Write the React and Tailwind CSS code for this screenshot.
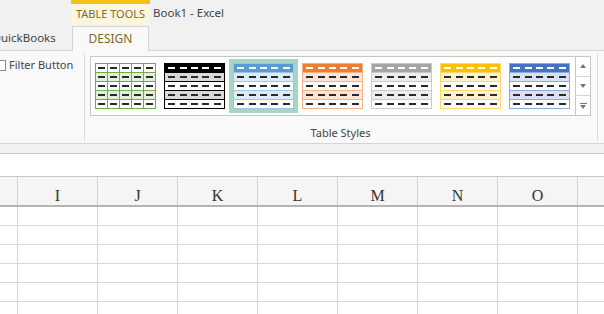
import React from "react";

const STYLES = [
  { kind: "grid", border: "#70ad47", band: "#e2efda", line: "#70ad47", head: null },
  { kind: "band", border: "#000000", band: "#d9d9d9", line: "#000000", head: "#000000" },
  { kind: "band", border: "#9dc3e6", band: "#ddebf7", line: "#9dc3e6", head: "#5b9bd5", selected: true },
  { kind: "band", border: "#f4b183", band: "#fce4d6", line: "#f8cbad", head: "#ed7d31" },
  { kind: "band", border: "#c9c9c9", band: "#ededed", line: "#d9d9d9", head: "#a5a5a5" },
  { kind: "band", border: "#ffd966", band: "#fff2cc", line: "#ffe699", head: "#ffc000" },
  { kind: "band", border: "#8ea9db", band: "#d9e1f2", line: "#b4c6e7", head: "#4472c4" },
];

const COLUMNS = ["I", "J", "K", "L", "M", "N", "O"];

function Dash({ light }) {
  return <div className={light ? "w-[7px] h-[2px] bg-white" : "w-[7px] h-[2px] bg-[#2a2a2a]"} />;
}

function Thumb({ s }) {
  const rows = [0, 1, 2, 3, 4];
  const cols = [0, 1, 2, 3, 4];
  if (s.kind === "grid") {
    return (
      <div className="w-[61px] h-[46px] flex flex-col gap-px p-px" style={{ background: s.line }}>
        {rows.map((r) => (
          <div key={r} className="flex-1 flex gap-px">
            {cols.map((c) => (
              <div
                key={c}
                className="flex-1 flex items-center justify-center"
                style={{ background: r % 2 === 1 ? s.band : "#ffffff" }}
              >
                <Dash />
              </div>
            ))}
          </div>
        ))}
      </div>
    );
  }
  return (
    <div className="w-[61px] h-[46px] flex flex-col gap-px p-px" style={{ background: s.border }}>
      {rows.map((r) => {
        let bg = "#ffffff";
        if (r === 0) bg = s.head;
        else if (r % 2 === 1) bg = s.band;
        return (
          <div key={r} className="flex-1 flex items-center justify-around px-[1px]" style={{ background: bg }}>
            {cols.map((c) => (
              <Dash key={c} light={r === 0} />
            ))}
          </div>
        );
      })}
    </div>
  );
}

function Arrow({ dir, bar }) {
  return (
    <div className="flex flex-col items-center">
      {bar && <div className="w-[7px] h-px bg-[#777] mb-px" />}
      {dir === "up" ? (
        <div className="w-0 h-0 border-l-[3px] border-r-[3px] border-b-[4px] border-l-transparent border-r-transparent border-b-[#777]" />
      ) : (
        <div className="w-0 h-0 border-l-[3px] border-r-[3px] border-t-[4px] border-l-transparent border-r-transparent border-t-[#777]" />
      )}
    </div>
  );
}

export default function App() {
  return (
    <div className="w-[604px] h-[314px] overflow-hidden bg-white text-[#444] font-['Noto_Sans',sans-serif] flex flex-col">
      {/* title bar */}
      <div className="h-[25px] bg-[#f1f1f1] flex shrink-0">
        <div className="w-[71px]" />
        <div className="w-[79px] border-t-4 border-[#f2c314] bg-[#fcf6df] flex items-center justify-center text-[11px] text-[#7d6d22]">
          TABLE TOOLS
        </div>
        <div className="pl-[3px] flex items-center text-[11.5px] text-[#444]">Book1 - Excel</div>
      </div>

      {/* tabs */}
      <div className="h-[25px] bg-[#f1f1f1] flex items-end shrink-0 relative z-10">
        <div className="w-[72px] h-full overflow-hidden flex items-center">
          <span className="-ml-[8px] text-[11.5px] text-[#444] whitespace-nowrap">QuickBooks</span>
        </div>
        <div className="w-[77px] h-[25px] -mb-px bg-[#f9f9f9] border border-b-0 border-[#d5d5d5] flex items-center justify-center text-[12px] text-[#7d6d22]">
          DESIGN
        </div>
      </div>

      {/* ribbon */}
      <div className="h-[94px] shrink-0 bg-[#f9f9f9] border-t border-b border-[#d5d5d5] flex">
        <div className="w-[84px] flex flex-col pt-[7px]">
          <div className="flex items-center gap-[3px]">
            <div className="w-[11px] h-[11px] -ml-[5px] bg-white border border-[#8a8a8a]" />
            <span className="text-[11px] text-[#444] leading-[14px] whitespace-nowrap">Filter Button</span>
          </div>
        </div>
        <div className="w-px bg-[#dcdcdc] my-[2px]" />
        <div className="w-[512px] flex flex-col pl-[5px] pt-[5px]">
          <div className="w-[501px] h-[60px] bg-white border border-[#c6c6c6] flex">
            <div className="flex pt-[2px] w-[485px]">
              {STYLES.map((s, i) => (
                <div
                  key={i}
                  className={
                    s.selected
                      ? "w-[69px] h-[54px] flex items-center justify-center bg-[#a6d6c2]"
                      : "w-[69px] h-[54px] flex items-center justify-center"
                  }
                >
                  <Thumb s={s} />
                </div>
              ))}
            </div>
            <div className="w-[15px] flex flex-col border-l border-[#c6c6c6]">
              <div className="flex-1 flex items-center justify-center border-b border-[#d6d6d6]">
                <Arrow dir="up" />
              </div>
              <div className="flex-1 flex items-center justify-center border-b border-[#d6d6d6]">
                <Arrow dir="down" />
              </div>
              <div className="flex-1 flex items-center justify-center">
                <Arrow dir="down" bar />
              </div>
            </div>
          </div>
          <div className="flex-1 flex items-center justify-center w-[501px] text-[11px] text-[#444] pt-[8px]">
            Table Styles
          </div>
        </div>
        <div className="w-px bg-[#dcdcdc] my-[2px]" />
      </div>

      {/* gap band */}
      <div className="h-[10px] shrink-0 bg-[#f1f1f1] border-b border-[#c8c8c8]" />

      {/* formula bar area */}
      <div className="h-[23px] shrink-0 bg-white border-b border-[#c8c8c8]" />

      {/* column headers */}
      <div className="h-[30px] shrink-0 bg-[#f5f5f5] border-b-2 border-[#b4b4b4] flex">
        <div className="w-[18px] border-r border-[#d4d4d4]" />
        {COLUMNS.map((c) => (
          <div
            key={c}
            className="w-[80px] border-r border-[#d4d4d4] flex items-center justify-center pt-[9px] font-['Liberation_Serif',serif] text-[16px] text-[#333]"
          >
            {c}
          </div>
        ))}
        <div className="flex-1" />
      </div>

      {/* grid */}
      <div className="flex-1 flex flex-col">
        {[0, 1, 2, 3, 4, 5].map((r) => (
          <div key={r} className="h-[19px] shrink-0 border-b border-[#d8d8d8] flex">
            <div className="w-[18px] border-r border-[#d4d4d4]" />
            {COLUMNS.map((c) => (
              <div key={c} className="w-[80px] border-r border-[#d4d4d4]" />
            ))}
            <div className="flex-1" />
          </div>
        ))}
      </div>
    </div>
  );
}
